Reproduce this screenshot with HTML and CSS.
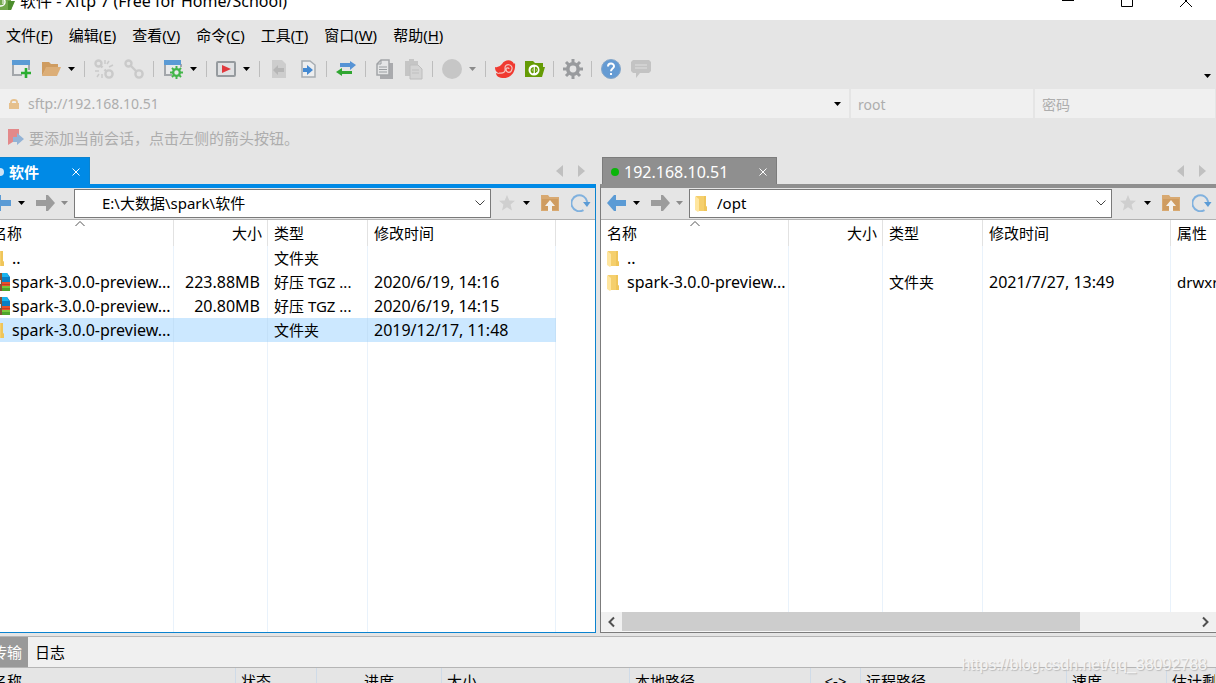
FILE: index.html
```html
<!DOCTYPE html>
<html lang="zh-CN">
<head>
<meta charset="utf-8">
<title>软件 - Xftp 7</title>
<link rel="stylesheet" href="styles.css">
</head>
<body>
<svg class="defs" aria-hidden="true">
  <defs>
    <symbol id="caret" viewBox="0 0 7 4"><path d="M0 0h7L3.500 4z"/></symbol>
    <symbol id="back" viewBox="0 0 20 16"><path d="M0 8L7 0h2v5h10v6H9v5H7z"/></symbol>
    <symbol id="forward" viewBox="0 0 20 16"><path d="M20 8L13 0h-2v5H1v6h10v5h2z"/></symbol>
    <symbol id="folder" viewBox="0 0 13 17"><path d="M1 1h10v10l1 1v4H3z" fill="#f5cf6c"/><path d="M9 1h2v10l1 1v4H9z" fill="#efc55a"/><path d="M0 1l4 3v12l-1 1-3-2z" fill="#ffe69f"/></symbol>
    <symbol id="archive" viewBox="0 0 20 18"><path d="M3 0h14l3 4v14H3z" fill="#0a7fc4"/><path d="M5 0h12l2 4H5z" fill="#18b4ef"/><path d="M5 9h15v5H5z" fill="#e9502b"/><path d="M5 11h15v1H5z" fill="#c63b23"/><path d="M5 13h15v5H5z" fill="#4da52c"/><path d="M5 13h15v2H5z" fill="#78c93c"/><path d="M8 0h4v18H8z" fill="#855335"/><path d="M9 7h2v4H9z" fill="#ddd"/></symbol>
    <symbol id="star" viewBox="0 0 16 16"><path d="M8 0l2.300 5.400 5.700.4-4.400 3.800L13 15.500 8 12.300 3 15.500l1.400-5.900L0 5.800l5.700-.4z" fill="#cfcfcf"/></symbol>
    <symbol id="up" viewBox="0 0 18 16"><path d="M0 0h7l1.500 2H18v14H0z" fill="#d8a971"/><path d="M1 4h16v11H1z" fill="#cf9c60"/><path d="M9 5l5 6h-3v5H7v-5H4z" fill="#f4f1ec"/></symbol>
    <symbol id="refresh" viewBox="0 0 20 18"><path d="M12.500 16.100A8 8 0 1 1 16.300 8" fill="none" stroke="#80b1de" stroke-width="2"/><path d="M12 8h7.500L16 13z" fill="#5b9bd5"/></symbol>
    <symbol id="chain" viewBox="0 0 20 20"><g fill="none" stroke="#cacaca" stroke-width="2.400"><circle cx="4.500" cy="4.500" r="3"/><circle cx="15" cy="15" r="3.600"/><path d="M6.500 6.500l6 6"/></g></symbol>
    <symbol id="gear" viewBox="0 0 20 20"><circle cx="10" cy="10" r="5.200" fill="none" stroke-width="3.600"/><path d="M10 0v4M10 16v4M0 10h4M16 10h4M3 3l3 3M14 14l3 3M3 17l3-3M14 6l3-3" fill="none" stroke-width="3"/></symbol>
  </defs>
</svg>
<div class="app">
  <header class="titlebar">
    <svg class="logo" viewBox="0 0 20 20"><path d="M0 3h9l2 3h4v4l3 1-3 8H0z" fill="#71a84c"/><path d="M12 10h7l-4 9h-3z" fill="#4c8d2d"/><circle cx="5" cy="11" r="4" fill="none" stroke="#fff" stroke-width="1.500"/><path d="M3 9v4M7 9v4" stroke="#fff"/></svg>
    <h1 class="title">软件 - Xftp 7 (Free for Home/School)</h1>
    <button class="winbtn" aria-label="最小化"><svg viewBox="0 0 12 12"><path d="M0 5.500h12"/></svg></button>
    <button class="winbtn" aria-label="最大化"><svg viewBox="0 0 12 12"><path d="M.5.5h11v11H.5z"/></svg></button>
    <button class="winbtn" aria-label="关闭"><svg viewBox="0 0 12 12"><path d="M0 0l12 12M12 0L0 12"/></svg></button>
  </header>

  <nav class="menubar">
    <button>文件(<u>F</u>)</button><button>编辑(<u>E</u>)</button><button>查看(<u>V</u>)</button><button>命令(<u>C</u>)</button><button>工具(<u>T</u>)</button><button>窗口(<u>W</u>)</button><button>帮助(<u>H</u>)</button>
  </nav>

  <div class="toolbar" role="toolbar">
    <button class="tool" aria-label="新建"><svg viewBox="0 0 20 20"><path d="M2 5v11h9M18 5v6" fill="none" stroke="#a3a7ab" stroke-width="2"/><path d="M3 5h14v10H3z" fill="#e9eaeb"/><path d="M1 1h18v5H1z" fill="#5b9bd5"/><path d="M15 9v10M10 14h10" stroke="#2bad31" stroke-width="2.600"/></svg></button>
    <button class="tool" aria-label="打开"><svg viewBox="0 0 20 20"><path d="M1 3h7l2 2h7v4H6L1 16z" fill="#cf9c60"/><path d="M1 17L5 8h15l-4 9z" fill="#dcae77"/><path d="M1 3v14l3-8z" fill="#cf9c60"/></svg></button>
    <button class="drop" aria-label="打开选项"><svg><use href="#caret"/></svg></button>
    <i class="sep"></i>
    <button class="tool" aria-label="断开"><svg viewBox="0 0 20 20"><g fill="none" stroke="#cacaca" stroke-width="2.400"><circle cx="4.500" cy="4.500" r="3"/><circle cx="15" cy="15" r="3.600"/><path d="M6.500 6.500l2 2M10.500 10.500l2 2"/><path d="M11 1v4M15 2l-2 3M19 6l-4 2M1 12h4M3 18l2-3M8 19v-4" stroke-width="1.500"/></g></svg></button>
    <button class="tool" aria-label="连接"><svg><use href="#chain"/></svg></button>
    <i class="sep"></i>
    <button class="tool" aria-label="会话属性"><svg viewBox="0 0 20 20"><path d="M2 5v11h7M18 5v3" fill="none" stroke="#a3a7ab" stroke-width="2"/><path d="M3 5h14v10H3z" fill="#e9eaeb"/><path d="M1 1h17v5H1z" fill="#5b9bd5"/><use href="#gear" x="7" y="7" width="13" height="13" stroke="#42b549"/></svg></button>
    <button class="drop" aria-label="属性选项"><svg><use href="#caret"/></svg></button>
    <i class="sep"></i>
    <button class="tool" aria-label="运行"><svg viewBox="0 0 20 20"><rect x="1" y="3" width="18" height="14" rx="1" fill="#e0e1e3" stroke="#969b9f" stroke-width="2"/><path d="M6 6l9 4-9 4z" fill="#e0393e"/></svg></button>
    <button class="drop" aria-label="运行选项"><svg><use href="#caret"/></svg></button>
    <i class="sep"></i>
    <button class="tool narrow" aria-label="传到左侧"><svg viewBox="0 0 20 20"><path d="M3 1h10l4 4v14H3z" fill="#cdcdcd"/><path d="M4 11l5-5v3h6v4H9v3z" fill="#b6b6b6"/></svg></button>
    <button class="tool narrow" aria-label="传到右侧"><svg viewBox="0 0 20 20"><path d="M4 2h8l5 4v12H4z" fill="#edeeef" stroke="#a7adb2" stroke-width="1.500"/><path d="M5 9h4V6l6 5-6 5v-3H5z" fill="#4389d2"/></svg></button>
    <i class="sep"></i>
    <button class="tool" aria-label="同步"><svg viewBox="0 0 20 20"><path d="M4 4h10V2l6 4-6 5V8H4z" fill="#5693d5"/><path d="M16 12H6V9l-6 4 6 4v-2h10z" fill="#30a631"/></svg></button>
    <i class="sep"></i>
    <button class="tool narrow" aria-label="复制"><svg viewBox="0 0 20 20"><path d="M5 4h13v16H5z" fill="#a9aaad"/><path d="M6 1h8v15H2V5z" fill="#e4e5e6" stroke="#a3a5a8" stroke-width="1.500"/><path d="M6 1v4H2M4 8h8M4 10.500h8M4 13h8" fill="none" stroke="#999da0"/></svg></button>
    <button class="tool narrow" aria-label="粘贴"><svg viewBox="0 0 20 20"><path d="M1 2h4V0h5v2h4v15H1z" fill="#c5c5c5"/><path d="M6 6h8l4 4v10H6z" fill="#d4d4d4" stroke="#bebebe"/><path d="M8 11h7M8 14h7" stroke="#c0c0c0"/></svg></button>
    <i class="sep"></i>
    <button class="tool" aria-label="停止"><svg viewBox="0 0 20 20"><circle cx="10" cy="10" r="10" fill="#c6c6c6"/></svg></button>
    <button class="drop muted" aria-label="停止选项"><svg><use href="#caret"/></svg></button>
    <i class="sep"></i>
    <button class="tool" aria-label="Xshell"><svg viewBox="0 0 20 20"><path d="M0 8q4 1 7-3c3-5 10-5 12 0l1-1c1 9-4 15-11 15-5 0-8-2-8-5 2 1 3 1 4 0-3 0-5-2-5-6z" fill="#f03a31"/><path d="M4 14q7 1 6-5c0-5 8-4 7 1s-6 4-6 0c1-2 3-1 3 0" fill="none" stroke="#f4c3be" stroke-width="1.200"/></svg></button>
    <button class="tool narrow" aria-label="Xftp"><svg viewBox="0 0 20 20"><path d="M0 2h8l2 2h8v4h2l-3 10H0z" fill="#659b05"/><circle cx="9" cy="11" r="5.500" fill="#fff"/><path d="M8 8v6M8 14q-3-2-1-5M10.500 14V8M10.500 8q3 2 1 5" fill="none" stroke="#659b05" stroke-width="1.300"/></svg></button>
    <i class="sep"></i>
    <button class="tool narrow" aria-label="选项"><svg stroke="#999b9e"><use href="#gear"/></svg></button>
    <i class="sep"></i>
    <button class="tool" aria-label="帮助"><svg viewBox="0 0 20 20"><circle cx="10" cy="10" r="9.500" fill="#659bd3" stroke="#84a6c9"/><path d="M7 7.500C7 3.500 13 3.500 13 7.300c0 2.400-3 2.200-3 5" fill="none" stroke="#fff" stroke-width="2"/><path d="M9 14h2v2H9z" fill="#fff"/></svg></button>
    <button class="tool" aria-label="反馈"><svg viewBox="0 0 20 20"><path d="M2 1h16l2 2v9l-2 2h-9l-4 5v-5H2l-2-2V3z" fill="#c3c3c3"/><path d="M4 6h12M4 9h12" stroke="#d6d6d6" stroke-width="1.500"/></svg></button>
    <button class="drop more" aria-label="更多"><svg><use href="#caret"/></svg></button>
  </div>

  <div class="address">
    <div class="field host">
      <svg class="lock" viewBox="0 0 10 11"><path d="M2 6V3q0-2 3-2t3 2v3" fill="none" stroke="#e6c08c" stroke-width="1.800"/><path d="M0 4h10v6H0z" fill="#e6c08c"/></svg>
      <input type="text" aria-label="主机" value="sftp://192.168.10.51">
      <button class="drop" aria-label="历史"><svg><use href="#caret"/></svg></button>
    </div>
    <div class="field"><input type="text" aria-label="用户名" placeholder="root"></div>
    <div class="field"><input type="password" aria-label="密码" placeholder="密码"></div>
  </div>

  <div class="hint">
    <svg viewBox="0 0 16 17"><path d="M0 0h11v9L0 16z" fill="#e3898a"/><path d="M5 8h4V4l7 6-7 6v-3H5z" fill="#93b3d6"/></svg>
    <span>要添加当前会话，点击左侧的箭头按钮。</span>
  </div>

  <main class="panes">
    <section class="pane local">
      <div class="tabs">
        <button class="tab"><i class="dot"></i><b>软件</b><svg class="close" viewBox="0 0 8 8"><path d="M.5.5l7 7M7.500.5l-7 7"/></svg></button>
        <button class="turn" aria-label="上一个"><svg viewBox="0 0 7 12"><path d="M7 0v12L0 6z"/></svg></button>
        <button class="turn" aria-label="下一个"><svg viewBox="0 0 7 12"><path d="M0 0v12l7-6z"/></svg></button>
      </div>
      <div class="body">
        <div class="pathbar">
          <button class="nav blue" aria-label="后退"><svg><use href="#back"/></svg></button>
          <button class="drop" aria-label="后退历史"><svg><use href="#caret"/></svg></button>
          <button class="nav" aria-label="前进"><svg><use href="#forward"/></svg></button>
          <button class="drop muted" aria-label="前进历史"><svg><use href="#caret"/></svg></button>
          <div class="combo"><i class="pic"></i><input type="text" aria-label="本地路径" value="E:\大数据\spark\软件"><button aria-label="展开"><svg viewBox="0 0 10 6"><path d="M.5.5L5 5 9.500.5"/></svg></button></div>
          <button class="fav" aria-label="收藏"><svg><use href="#star"/></svg></button>
          <button class="drop" aria-label="收藏列表"><svg><use href="#caret"/></svg></button>
          <button class="upbtn" aria-label="上级"><svg><use href="#up"/></svg></button>
          <button class="reload" aria-label="刷新"><svg><use href="#refresh"/></svg></button>
        </div>
        <div class="list">
          <table>
            <colgroup><col class="c-name"><col class="c-size"><col class="c-type"><col class="c-date"><col></colgroup>
            <thead><tr><th>名称<svg class="sort" viewBox="0 0 10 6"><path d="M.5 5L5 .5 9.500 5"/></svg></th><th class="num">大小</th><th>类型</th><th>修改时间</th><th></th></tr></thead>
            <tbody>
              <tr><td><span class="file"><svg class="fold"><use href="#folder"/></svg>..</span></td><td></td><td>文件夹</td><td></td><td></td></tr>
              <tr><td><span class="file"><svg class="arch"><use href="#archive"/></svg>spark-3.0.0-preview...</span></td><td class="num">223.88MB</td><td>好压 TGZ ...</td><td class="date">2020/6/19, 14:16</td><td></td></tr>
              <tr><td><span class="file"><svg class="arch"><use href="#archive"/></svg>spark-3.0.0-preview...</span></td><td class="num">20.80MB</td><td>好压 TGZ ...</td><td class="date">2020/6/19, 14:15</td><td></td></tr>
              <tr class="selected"><td><span class="file"><svg class="fold"><use href="#folder"/></svg>spark-3.0.0-preview...</span></td><td></td><td>文件夹</td><td class="date">2019/12/17, 11:48</td><td></td></tr>
              <tr class="rest" aria-hidden="true"><td></td><td></td><td></td><td></td><td></td></tr>
            </tbody>
          </table>
        </div>
      </div>
    </section>

    <section class="pane remote">
      <div class="tabs">
        <button class="tab"><i class="dot"></i><span>192.168.10.51</span><svg class="close" viewBox="0 0 8 8"><path d="M.5.5l7 7M7.500.5l-7 7"/></svg></button>
        <button class="turn" aria-label="上一个"><svg viewBox="0 0 7 12"><path d="M7 0v12L0 6z"/></svg></button>
        <button class="turn" aria-label="下一个"><svg viewBox="0 0 7 12"><path d="M0 0v12l7-6z"/></svg></button>
      </div>
      <div class="body">
        <div class="pathbar">
          <button class="nav blue" aria-label="后退"><svg><use href="#back"/></svg></button>
          <button class="drop" aria-label="后退历史"><svg><use href="#caret"/></svg></button>
          <button class="nav" aria-label="前进"><svg><use href="#forward"/></svg></button>
          <button class="drop muted" aria-label="前进历史"><svg><use href="#caret"/></svg></button>
          <div class="combo"><i class="pic"><svg class="fold"><use href="#folder"/></svg></i><input type="text" aria-label="远程路径" value="/opt"><button aria-label="展开"><svg viewBox="0 0 10 6"><path d="M.5.5L5 5 9.500.5"/></svg></button></div>
          <button class="fav" aria-label="收藏"><svg><use href="#star"/></svg></button>
          <button class="drop" aria-label="收藏列表"><svg><use href="#caret"/></svg></button>
          <button class="upbtn" aria-label="上级"><svg><use href="#up"/></svg></button>
          <button class="reload" aria-label="刷新"><svg><use href="#refresh"/></svg></button>
        </div>
        <div class="list">
          <table>
            <colgroup><col class="c-name"><col class="c-size"><col class="c-type"><col class="c-date"><col></colgroup>
            <thead><tr><th>名称<svg class="sort" viewBox="0 0 10 6"><path d="M.5 5L5 .5 9.500 5"/></svg></th><th class="num">大小</th><th>类型</th><th>修改时间</th><th>属性</th></tr></thead>
            <tbody>
              <tr><td><span class="file"><svg class="fold"><use href="#folder"/></svg>..</span></td><td></td><td></td><td></td><td></td></tr>
              <tr><td><span class="file"><svg class="fold"><use href="#folder"/></svg>spark-3.0.0-preview...</span></td><td></td><td>文件夹</td><td class="date">2021/7/27, 13:49</td><td>drwxr</td></tr>
              <tr class="rest" aria-hidden="true"><td></td><td></td><td></td><td></td><td></td></tr>
            </tbody>
          </table>
        </div>
        <div class="scroll">
          <button aria-label="向左滚动"><svg viewBox="0 0 7 10"><path d="M6 .5L1.500 5 6 9.500"/></svg></button>
          <div class="track"><div class="thumb"></div></div>
          <button aria-label="向右滚动"><svg viewBox="0 0 7 10"><path d="M1 .5L5.500 5 1 9.500"/></svg></button>
        </div>
      </div>
    </section>
  </main>

  <footer class="dock">
    <div class="docktabs"><button class="on">传输</button><button>日志</button></div>
    <table class="queue">
      <colgroup><col class="q-name"><col class="q-state"><col class="q-prog"><col class="q-size"><col class="q-local"><col class="q-dir"><col class="q-remote"><col class="q-speed"><col></colgroup>
      <thead><tr><th>名称</th><th>状态</th><th class="mid">进度</th><th>大小</th><th>本地路径</th><th class="mid">&lt;-&gt;</th><th>远程路径</th><th>速度</th><th>估计剩余</th></tr></thead>
    </table>
  </footer>
  <div class="watermark">https://blog.csdn.net/qq_38092788</div>
</div>
</body>
</html>
```

FILE: styles.css
```css
* { box-sizing: border-box; }
html, body { height: 100%; margin: 0; overflow: hidden; }
body {
  background: #e5e5e5;
  color: #000;
  font: 15px/24px "Noto Sans", "Noto Sans CJK SC", sans-serif;
}
button, input { font: inherit; color: inherit; border: 0; padding: 0; margin: 0; background: none; }
input { min-width: 0; outline: 0; }
svg { display: block; overflow: visible; }
.defs { position: absolute; width: 0; height: 0; }

/* The window is partly scrolled off the top edge */
.app {
  position: relative;
  display: flex;
  flex-direction: column;
  height: calc(100% + 20px);
  margin-top: -20px;
}

.titlebar { display: flex; align-items: center; height: 40px; padding: 2px 24px 0 0; background: #fff; }
.logo { width: 20px; height: 20px; margin-left: -4px; }
.title { flex: 1; margin: 0 0 0 4px; font-size: 16px; font-weight: 400; line-height: 24px; }
.winbtn { width: 12px; height: 12px; margin-left: 47px; }
.winbtn svg { width: 12px; height: 12px; fill: none; stroke: #000; }

.menubar { display: flex; gap: 16px; height: 32px; padding: 0 6px 2px; align-items: center; }
.menubar u { text-underline-offset: 2px; }

.toolbar { display: flex; align-items: center; height: 37px; padding: 0 6px 4px 11px; }
.tool { width: 20px; }
.tool.narrow { width: 19px; }
.tool svg { width: 20px; height: 20px; }
.tool + .tool { margin-left: 10px; }
.sep { width: 1px; height: 16px; margin: 0 9px; background: #bdbdbd; }
.drop { width: 7px; margin-left: 7px; }
.drop svg { width: 7px; height: 4px; fill: #000; }
.drop.muted svg { fill: #8b8b8b; }
.drop.more { align-self: flex-end; margin: 0 -1px 7px auto; }

.address { display: grid; grid-template-columns: 849fr 182fr 180fr; gap: 2px; height: 29px; padding-right: 1px; color: #adadad; font-size: 14px; }
.field { display: flex; align-items: center; min-width: 0; background: #f0f0f0; padding: 2px 7px 0; }
.field input { flex: 1; width: 0; }
.field input::placeholder { color: #adadad; opacity: 1; }
.field.host { padding: 1px 8px 0; }
.lock { width: 10px; height: 11px; margin: 0 9px 0 1px; }

.hint { display: flex; align-items: center; gap: 5px; height: 39px; padding: 0 8px; color: #adadad; }
.hint svg { width: 16px; height: 17px; }

.panes { display: flex; flex: 1; min-height: 0; gap: 4px; margin: 0 -1px 0 -15px; }
.pane { display: flex; flex-direction: column; min-width: 0; }
.local { flex: 611 1 0; --accent: #008ae6; --edge: #0b83cf; --dot: #cfe4f5; --tab: 103px; }
.remote { flex: 617 1 0; --accent: #8f8f8f; --edge: #7c7c7c; --dot: #0ab50a; --tab: 175px; }
.tabs { display: flex; align-items: center; height: 27px; padding: 0 11px 0 2px; }
.tab {
  display: flex;
  align-items: center;
  width: var(--tab);
  height: 27px;
  padding: 1px 9px 0 8px;
  margin-right: auto;
  color: #fff;
  background: var(--accent);
  border: 1px solid var(--edge);
  border-bottom: 0;
}
.tab span { font-size: 16px; }
.dot { width: 8px; height: 8px; margin-right: 5px; border-radius: 50%; background: var(--dot); }
.close { width: 8px; height: 8px; margin-left: auto; fill: none; stroke: #fff; }
.turn { width: 7px; margin-left: 15px; }
.turn svg { width: 7px; height: 12px; fill: #c0c0c0; }
.body {
  display: flex;
  flex: 1;
  flex-direction: column;
  min-height: 0;
  border: 1px solid var(--edge);
  border-top: 4px solid var(--accent);
}
.pathbar { display: flex; align-items: center; height: 32px; padding: 0 4px 1px 6px; border-bottom: 1px solid #b2b2b2; }
.nav { width: 20px; }
.nav svg { width: 20px; height: 16px; fill: #9c9c9c; }
.nav.blue svg { fill: #5b9bd5; }
.drop + .nav { margin-left: 10px; }
.pathbar .nav + .drop { margin-left: 6px; }
.combo {
  display: flex;
  flex: 1;
  align-items: center;
  height: 29px;
  margin: 0 8px 0 6px;
  padding: 0 5px;
  background: #fff;
  border: 1px solid #7a7a7a;
}
.combo input { flex: 1; }
.pic { width: 22px; }
.combo svg { fill: none; }
.combo button svg { width: 10px; height: 6px; stroke: #444; }
.fav svg { width: 16px; height: 16px; }
.fav + .drop { margin-left: 8px; }
.upbtn { margin-left: 11px; }
.upbtn svg { width: 18px; height: 16px; }
.reload { margin-left: 12px; }
.reload svg { width: 20px; height: 18px; }

.list { flex: 1; min-height: 0; background: #fff; }
table { width: 100%; border-spacing: 0; table-layout: fixed; }
.list table { height: 100%; }
.c-name { width: 188px; }
.c-size { width: 94px; }
.c-type { width: 100px; }
.c-date { width: 188px; }
th, td { padding: 0 6px; font-weight: 400; text-align: left; white-space: nowrap; overflow: hidden; border-right: 1px solid #e9f2fb; }
.list th { position: relative; height: 26px; border-color: #e2e2e2; }
.list td { height: 24px; }
.list .rest td { height: auto; }
.list th:last-child, .list td:last-child { border-right: 0; padding-right: 0; }
.list .num { text-align: right; padding-right: 5px; }
.list td.num { padding-right: 7px; }
.file, td.num, td.date { font-size: 16px; }
.sort { position: absolute; top: 1px; left: calc(50% - 5px); width: 10px; height: 6px; fill: none; stroke: #555; }
.file { display: flex; align-items: center; }
.fold { width: 13px; height: 17px; }
.file svg { flex: none; }
.file .fold { margin-right: 7px; }
.arch { width: 20px; height: 18px; margin: 0 2px 0 -2px; }
.selected td:not(:last-child) { background: #cce8ff; border-color: #c3e0f8; }

.scroll { display: flex; height: 20px; background: #f0f0f0; border-bottom: 1px solid #f7f7f7; }
.scroll button { display: flex; align-items: center; justify-content: center; width: 21px; }
.scroll svg { width: 7px; height: 10px; fill: none; stroke: #505050; stroke-width: 2; }
.track { flex: 1; }
.thumb { width: 80%; height: 100%; background: #cdcdcd; }

.dock { height: 47px; margin-top: 3px; overflow: hidden; border-top: 1px solid #b5b5b5; }
.docktabs { display: flex; height: 31px; background: #f0f0f0; border-bottom: 1px solid #b5b5b5; }
.docktabs button { padding: 0 7px 1px; }
.docktabs .on { margin-left: -15px; width: 43px; padding-right: 6px; background: #999; color: #fff; }
.queue { margin-left: -15px; width: calc(100% + 15px); }
.queue th { height: 26px; padding: 0 5px; border-color: #cfdbe8; }
.queue th:first-child { padding-left: 7px; }
.queue .mid { text-align: center; }
.q-name { width: 251px; }
.q-state { width: 81px; }
.q-prog { width: 125px; }
.q-size { width: 188px; }
.q-local { width: 181px; }
.q-dir { width: 50px; }
.q-remote { width: 206px; }
.q-speed { width: 100px; }

.watermark {
  position: absolute;
  right: 9px;
  bottom: 8px;
  color: #f4f4f4;
  font: 16px/20px "Liberation Sans", sans-serif;
  text-shadow: 1px 1px 1px #bbb;
}
```
